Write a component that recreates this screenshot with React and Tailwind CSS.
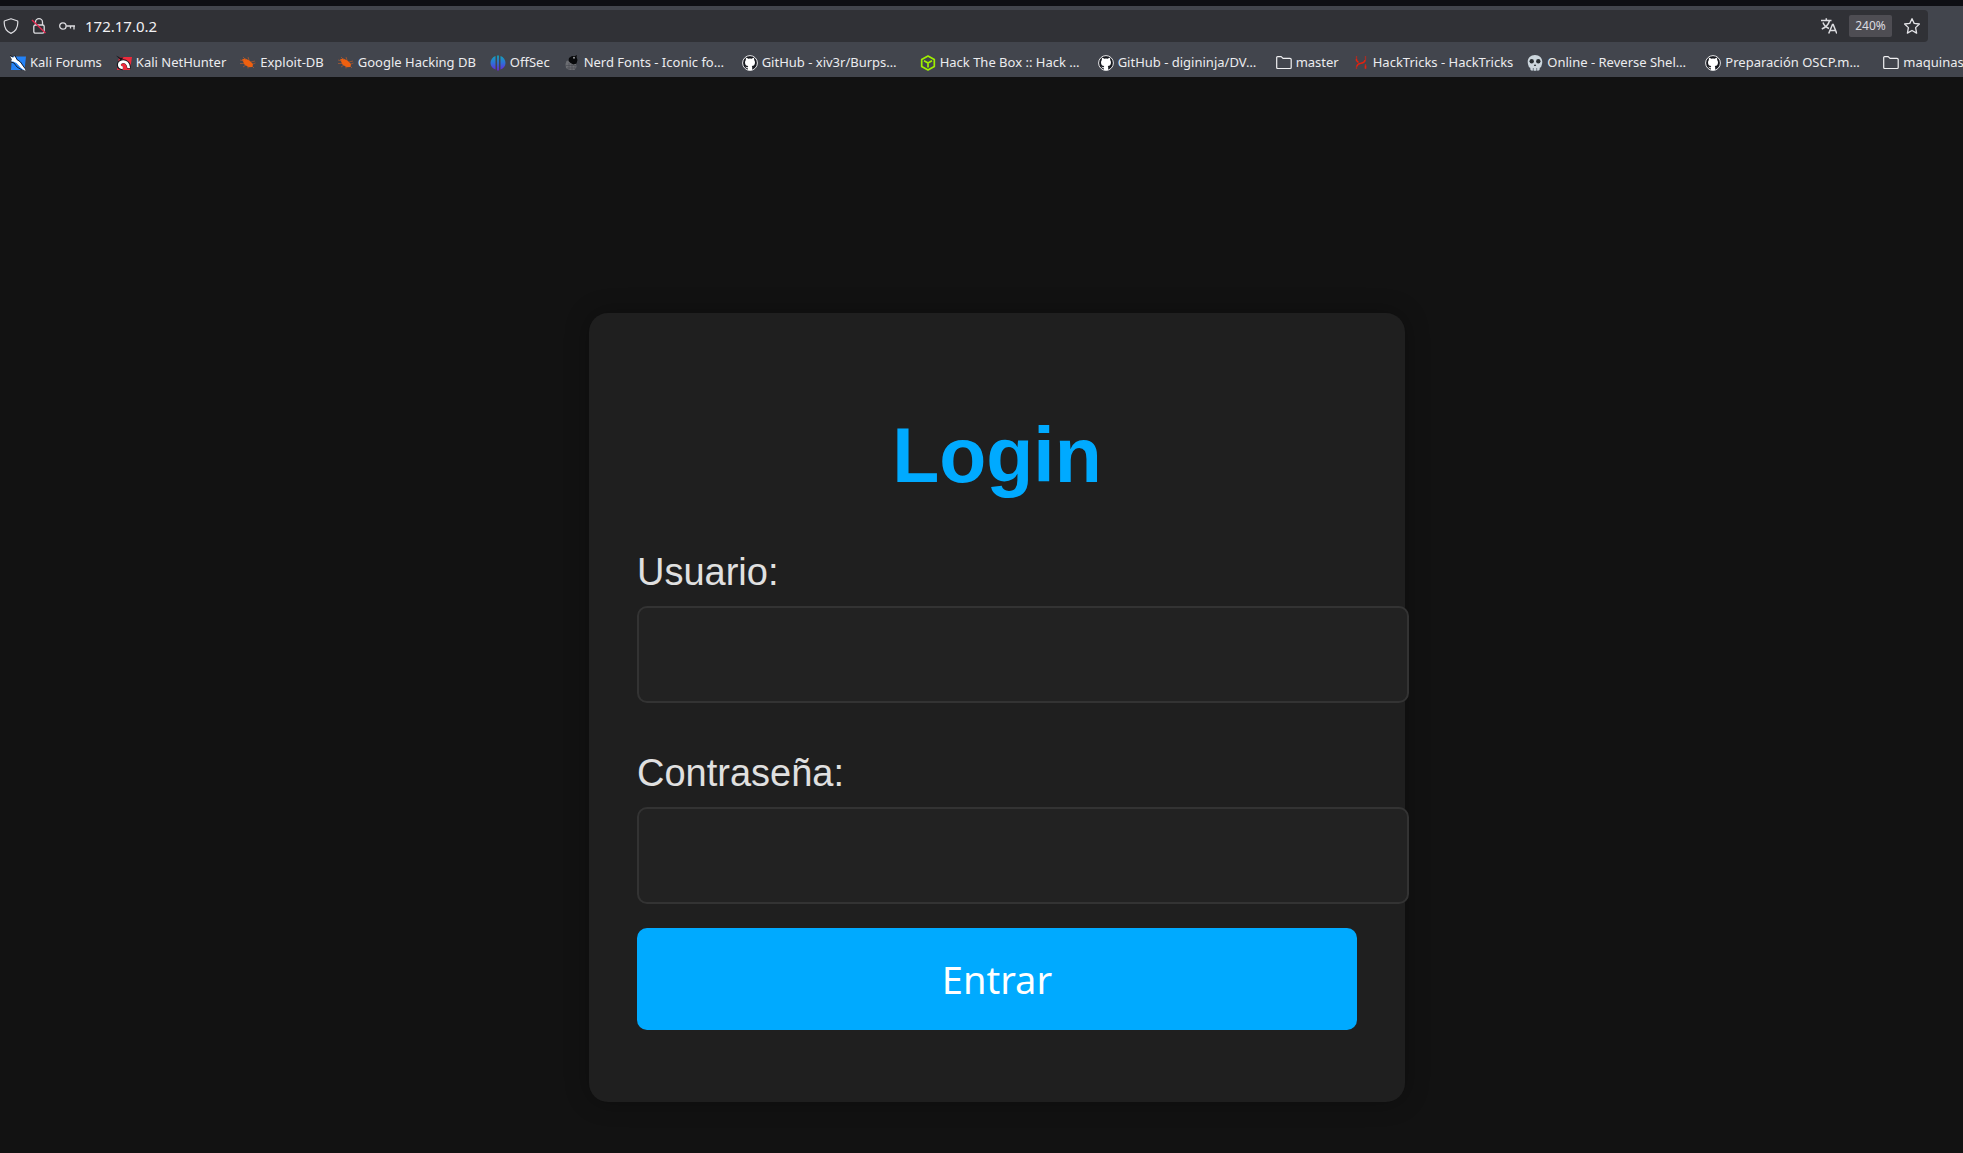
import React from "react";

const svg = "size-4 shrink-0";

function KaliIcon() {
  return (
    <svg className={svg} viewBox="0 0 16 16" aria-hidden="true">
      <path d="M2 1.500h14l-1.500 13.500H1z" fill="#2382f7" />
      <path d="M0 1l3.500 1.500L5 1l1.500 3.500L10 7l4.500 6 1 3-4.500-3L6.500 8 3 6.500 1 6.500 2 4.500z" fill="#fff" />
      <path d="M0 .5l3 1.500M5 .5l2 4 3.500 2.500 4.500 6.500M1 7l3 1 3 4 5 3" fill="none" stroke="#14171d" strokeWidth=".9" />
    </svg>
  );
}

function NetHunterIcon() {
  return (
    <svg className={svg} viewBox="0 0 16 16" aria-hidden="true">
      <path d="M3 2h13l-2 13H1z" fill="#ee2a3c" />
      <path d="M0 .5l4 2 3.500 0-2.500 3z" fill="#14171d" />
      <path d="M13 13.500C13 8.500 9.500 5.700 6 6.500 1.500 8 1.800 13 6.800 13.200" fill="none" stroke="#14171d" strokeWidth="4" />
      <path d="M12.800 13C12.500 8.500 9.500 6 6 6.800 2.200 8 2.500 12.600 6.800 12.900" fill="none" stroke="#fff" strokeWidth="2.800" />
    </svg>
  );
}

function BugIcon() {
  return (
    <svg className={svg} viewBox="0 0 16 16" aria-hidden="true">
      <path d="M2 4.500l3-1 4.500 2L13 9l-.5 3-4 .300L4.500 9.500z" fill="#f0600f" />
      <path d="M0 5l4 1M3 2l3 3M8 2l1 3M11 7l4-1M13 9l2.500-1M12 11l2 2M0 8.500l4 0M3 12l3-2M8 13.500v-2" stroke="#b55a2c" strokeWidth=".7" fill="none" />
    </svg>
  );
}

function OffSecIcon() {
  return (
    <svg className={svg} viewBox="0 0 16 16" aria-hidden="true">
      <defs>
        <linearGradient id="offsec" x1="0" y1="0" x2="0" y2="1">
          <stop offset="0" stopColor="#12a5b8" />
          <stop offset=".5" stopColor="#2f6fd8" />
          <stop offset="1" stopColor="#6a25d8" />
        </linearGradient>
      </defs>
      <path d="M5.500 1v13.500C2.500 13.500 .500 11 .500 8s2-6 5-7zM10.500 1v13.500c3-1 5-3.500 5-6.500s-2-6-5-7zM7.100 .5h1.800v15H7.100z" fill="url(#offsec)" />
    </svg>
  );
}

function NerdIcon() {
  return (
    <svg className={svg} viewBox="0 0 16 16" aria-hidden="true">
      <path d="M2.500 6l3-1 2 3 4.500 1 .5 3-2 3H5l-3-2-.5-4z" fill="#6b6d72" />
      <path d="M5 3l3-2 3 0 2-1-.5 2 1 3-1 3.500-3 1-3-1.500-2-2z" fill="#08090b" />
      <circle cx="10" cy="2.800" r="1" fill="#9a9ca0" />
      <path d="M2 10.500h10M3 13h8M5 8v7M8 9v7M11 10v4" stroke="#46484f" strokeWidth=".6" />
    </svg>
  );
}

function GitHubIcon() {
  return (
    <svg className={svg} viewBox="0 0 16 16" aria-hidden="true">
      <circle cx="8" cy="8" r="7.400" fill="#17191f" stroke="#e8e8ea" strokeWidth="1" />
      <path d="M5.800 15.300v-2.200c-1.600.3-2-.700-2.600-1.500 1 .1 1.400.9 2.600.7 0-.5.200-.9.500-1.200-2-.3-3.300-1.200-3.300-3.700 0-.9.300-1.700.9-2.300-.2-.6-.2-1.500.1-2.300.8 0 1.600.5 2.200.9a7.500 7.500 0 0 1 3.600 0c.6-.4 1.400-.9 2.200-.9.300.8.300 1.700.1 2.300.6.6.9 1.400.9 2.300 0 2.500-1.300 3.400-3.300 3.700.3.300.5.800.5 1.500v2.700z" fill="#fff" />
    </svg>
  );
}

function HtbIcon() {
  return (
    <svg className={svg} viewBox="0 0 16 16" fill="none" stroke="#9fef00" strokeWidth="1.700" strokeLinejoin="round" aria-hidden="true">
      <path d="M8 1l6.300 3.500v7L8 15l-6.300-3.500v-7z" />
      <path d="M4 5.700L8 8l4-2.300M8 8v4.500" />
    </svg>
  );
}

function FolderIcon() {
  return (
    <svg className={svg} viewBox="0 0 16 16" fill="none" stroke="#f0f0f2" strokeWidth="1.200" strokeLinejoin="round" aria-hidden="true">
      <path d="M.7 12.500v-10c0-.5.300-.9.900-.9h3.600L7 3.400h7c.8 0 1.200.4 1.200 1.100v8c0 .7-.4 1-1 1H1.700c-.6 0-1-.3-1-1z" />
    </svg>
  );
}

function HackTricksIcon() {
  return (
    <svg className={svg} viewBox="0 0 16 16" fill="none" stroke="#e3210f" aria-hidden="true">
      <path d="M3.500 4v1.500l2 2M4 11.500c0-2 1-2.500 3-3s5-.5 5-3.500M12.500 10.500v3" strokeWidth="1.600" />
      <path d="M3.500 1v3M12.500 1v4M3.500 11v3M12.500 9v5" strokeWidth="1.300" opacity=".6" />
    </svg>
  );
}

function SkullIcon() {
  return (
    <svg className={svg} viewBox="0 0 16 16" aria-hidden="true">
      <path d="M8 0c4.500 0 7.300 3 7.300 6.800 0 2-.6 3-.8 4-.2 1.200-.6 1.700-1.700 2l-.3 2.200-1.500.8-1.500-.5-1.500.7-1.500-.7-1.500.5-1.500-.8-.3-2.200c-1.100-.3-1.500-.8-1.700-2-.2-1-.8-2-.8-4C.7 3 3.500 0 8 0z" fill="#ccd6dd" />
      <circle cx="4.700" cy="6.300" r="2.200" fill="#292f33" />
      <circle cx="11.300" cy="6.300" r="2.200" fill="#292f33" />
      <path d="M8 9l1.200 2H6.800z" fill="#292f33" />
      <path d="M6.300 13v2.500M9.700 13v2.500" stroke="#5c6870" strokeWidth=".8" />
    </svg>
  );
}

const bookmarks = [
  { icon: KaliIcon, label: "Kali Forums" },
  { icon: NetHunterIcon, label: "Kali NetHunter" },
  { icon: BugIcon, label: "Exploit-DB" },
  { icon: BugIcon, label: "Google Hacking DB" },
  { icon: OffSecIcon, label: "OffSec" },
  { icon: NerdIcon, label: "Nerd Fonts - Iconic fo…", wide: true },
  { icon: GitHubIcon, label: "GitHub - xiv3r/Burps…", wide: true },
  { icon: HtbIcon, label: "Hack The Box :: Hack …", wide: true },
  { icon: GitHubIcon, label: "GitHub - digininja/DV…", wide: true },
  { icon: FolderIcon, label: "master" },
  { icon: HackTricksIcon, label: "HackTricks - HackTricks" },
  { icon: SkullIcon, label: "Online - Reverse Shel…", wide: true },
  { icon: GitHubIcon, label: "Preparación OSCP.m…", wide: true },
  { icon: FolderIcon, label: "maquinas" },
];

function AddressBar() {
  return (
    <div className="mr-[35px] flex h-8 items-center rounded-r bg-[#303136] pr-2 pl-[3px] text-[#f0f0f3]">
      <button type="button" aria-label="Tracking protection">
        <svg className="size-4" viewBox="0 0 16 16" fill="none" stroke="#dcdce0" strokeWidth="1.200" strokeLinejoin="round">
          <path d="M8 .7L14.700 3c.5 5.500-1.500 10-6.700 12.400C2.800 13 .8 8.500 1.300 3z" />
        </svg>
      </button>
      <button type="button" aria-label="Connection not secure" className="ml-3">
        <svg className="size-4" viewBox="0 0 16 16" fill="none" stroke="#dcdce0" strokeWidth="1.300">
          <path d="M4.500 7V4.200a3.500 3.500 0 0 1 7 0V7M4.500 7h7c1 0 1.700.5 1.700 1.500V13.500c0 1-.7 1.700-1.700 1.700h-7c-1 0-1.700-.7-1.700-1.700V8.500C2.800 7.500 3.500 7 4.500 7z" />
          <path d="M1 2l13.500 13" stroke="#e22850" strokeWidth="1.400" />
        </svg>
      </button>
      <button type="button" aria-label="Saved passwords" className="ml-3">
        <svg className="size-4" viewBox="0 0 16 16" fill="none" stroke="#dcdce0" strokeWidth="1.300">
          <circle cx="3.900" cy="8" r="3.200" />
          <path d="M7.200 8H16M15 8v3.500M11.500 8v2.500" />
        </svg>
      </button>
      <input
        type="text"
        aria-label="Address"
        defaultValue="172.17.0.2"
        className="ml-2.5 min-w-0 flex-1 bg-transparent text-[15px] leading-[22px] outline-none"
      />
      <button type="button" aria-label="Translate page">
        <svg className="size-4" viewBox="0 0 16 16" fill="none" stroke="#dcdce0" strokeWidth="1.500">
          <path d="M0 2.600h10.500M5.300.3v2.300M2 4.500c1 2.800 3.500 4.800 6 6M8.500 2.800C7.500 6.500 4.500 9.500.8 11" />
          <path d="M7.700 15.500l3.800-9h.7l3.600 9M9 12.600h5.700" />
        </svg>
      </button>
      <button type="button" className="ml-3 h-[22px] w-[43px] rounded-xs bg-[#4e4d53] text-xs text-[#dcdce0]">
        240%
      </button>
      <button type="button" aria-label="Bookmark this page" className="ml-3">
        <svg className="size-4" viewBox="0 0 16 16" fill="none" stroke="#e4e4e8" strokeWidth="1.300" strokeLinejoin="round">
          <path d="M8 .7l2.200 4.700 5.200.6-3.800 3.600 1 5.500L8 12.500l-4.600 2.600 1-5.500L.6 6l5.200-.6z" />
        </svg>
      </button>
    </div>
  );
}

function BookmarksBar() {
  return (
    <nav aria-label="Bookmarks" className="flex items-center gap-3.5 overflow-hidden pt-[11px] pb-[5px] pl-2.5">
      {bookmarks.map(({ icon: Icon, label, wide }) => (
        <a key={label} href="#" className="flex shrink-0 items-center gap-1 text-[13px] leading-[19px] text-[#ececef]">
          <Icon />
          <span className={wide ? "w-36 whitespace-nowrap" : "whitespace-nowrap"}>{label}</span>
        </a>
      ))}
    </nav>
  );
}

function Field({ id, label, type }) {
  return (
    <div>
      <label htmlFor={id} className="mb-3 block text-[38px] leading-11 text-[#e0e0e0]">
        {label}
      </label>
      <input
        id={id}
        type={type}
        className="block h-[97px] w-[calc(100%+52px)] rounded-[10px] border-2 border-[#333333] bg-[#222222] px-6 text-[32px] text-[#e0e0e0] outline-none"
      />
    </div>
  );
}

export default function App() {
  return (
    <div className="flex min-h-screen flex-col bg-[#121212]">
      <header className="border-t-6 border-[#0e0f14] bg-[#42454d] pt-1 font-['Noto_Sans',sans-serif]">
        <AddressBar />
        <BookmarksBar />
      </header>
      <main className="flex grow flex-col items-center pt-[236px] pr-4 pb-12 pl-[47px] font-['Liberation_Sans',Arial,sans-serif]">
        <form
          onSubmit={(e) => e.preventDefault()}
          className="w-full max-w-[816px] rounded-[19px] bg-[#1f1f1f] px-12 pt-[98px] pb-[72px] shadow-[0_0_24px_rgba(0,0,0,0.3)]"
        >
          <h1 className="mb-[51px] text-center text-[77px] leading-[88px] font-bold text-[#00aaff]">Login</h1>
          <div className="mb-6 flex flex-col gap-12">
            <Field id="usuario" label="Usuario:" type="text" />
            <Field id="contrasena" label="Contraseña:" type="password" />
          </div>
          <button
            type="submit"
            className="block h-[102px] w-full rounded-[10px] bg-[#00aaff] font-['Noto_Sans',sans-serif] text-[38px] text-white"
          >
            Entrar
          </button>
        </form>
      </main>
    </div>
  );
}
